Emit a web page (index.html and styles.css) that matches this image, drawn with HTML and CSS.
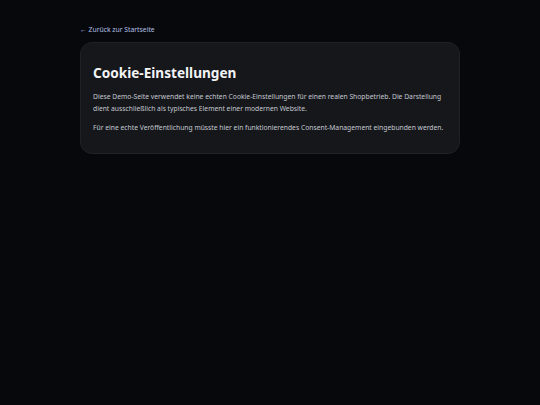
FILE: index.html
```html
<!DOCTYPE html>
<html lang="de">
<head>
    <meta charset="UTF-8">
    <meta name="viewport" content="width=device-width, initial-scale=1.0">
    <title>Cookie-Einstellungen</title>
    <link rel="stylesheet" href="styles.css">
</head>
<body>
    <main class="page">
        <a class="back-link" href="#">← Zurück zur Startseite</a>
        <section class="card">
            <h1>Cookie-Einstellungen</h1>
            <p>Diese Demo-Seite verwendet keine echten Cookie-Einstellungen für einen realen Shopbetrieb. Die Darstellung dient ausschließlich als typisches Element einer modernen Website.</p>
            <p>Für eine echte Veröffentlichung müsste hier ein funktionierendes Consent-Management eingebunden werden.</p>
        </section>
    </main>
</body>
</html>
```

FILE: styles.css
```css
body {
    margin: 0;
    background-color: #07080c;
    color: #e5e7eb;
    font-family: 'Noto Sans', sans-serif;
}

.page {
    max-width: 380px;
    margin: 0 auto;
    padding-top: 15px;
}

.back-link {
    display: inline-block;
    font-size: 6.8px;
    color: #b4c0e8;
    text-decoration: none;
    margin-bottom: 8px;
}

.card {
    background-color: #16171b;
    border: 1px solid #1f2126;
    border-radius: 12px;
    padding: 12px;
}

.card h1 {
    margin: 8px 0 9px;
    font-size: 13.6px;
    font-weight: 700;
    color: #f3f4f6;
}

.card p {
    margin: 0 0 7px;
    font-size: 6.75px;
    line-height: 12px;
    color: #c4c8d0;
}
```
